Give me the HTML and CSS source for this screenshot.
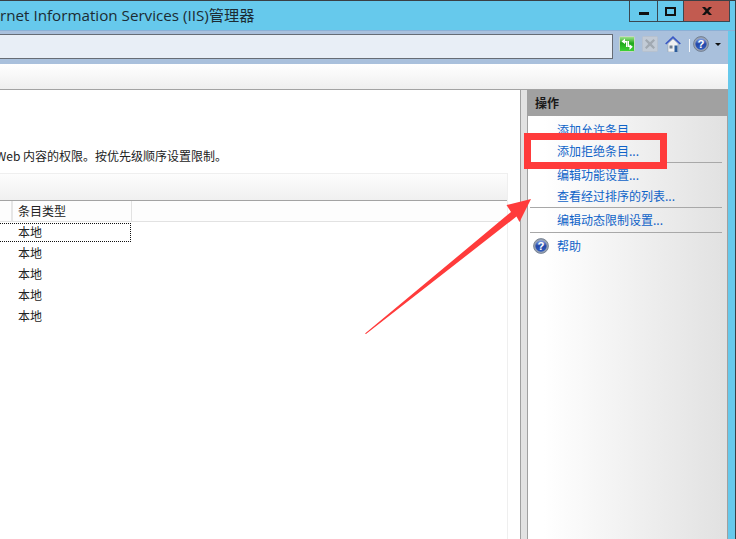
FILE: index.html
```html
<!DOCTYPE html>
<html lang="zh-CN">
<head>
    <meta charset="UTF-8">
    <title>Internet Information Services (IIS)管理器</title>
    <link rel="stylesheet" href="styles.css">
</head>
<body>
    <div class="window">
        <div class="title-bar">
            <span class="title-text">rnet Information Services (IIS)管理器</span>
            <div class="win-buttons">
                <span class="win-btn btn-min"><i class="glyph-min"></i></span>
                <span class="win-btn btn-max"><i class="glyph-max"></i></span>
                <span class="win-btn btn-close">
                    <svg width="14" height="10" viewBox="0 0 14 10"><path d="M2 1h3l2 2 2-2h3L8.500 5 12 9H9L7 7 5 9H2l3.500-4z" fill="#111"/></svg>
                </span>
            </div>
        </div>

        <div class="address-bar">
            <div class="address-input"></div>
            <div class="nav-icons">
                <svg class="nav-icon" width="16" height="16" viewBox="0 0 16 16">
                    <defs>
                        <linearGradient id="green-fill" x1="0" y1="0" x2="0" y2="1">
                            <stop offset="0" stop-color="#a6e88f"/>
                            <stop offset=".45" stop-color="#1fa81c"/>
                            <stop offset="1" stop-color="#3fd436"/>
                        </linearGradient>
                        <linearGradient id="help-shine" x1="0" y1="0" x2="0" y2="1">
                            <stop offset="0" stop-color="#86a3e4"/>
                            <stop offset=".5" stop-color="#2347a8"/>
                            <stop offset="1" stop-color="#2f5cc0"/>
                        </linearGradient>
                    </defs>
                    <rect x=".5" y=".5" width="15" height="15" rx="1" fill="url(#green-fill)" stroke="#c6d4c8"/>
                    <path d="M6 2.500 2.500 5.500 6 8V6.500h1V11h1.500V5H6z" fill="#fff"/>
                    <path d="M10.500 14 13.800 10.800 10.500 8.200v1.600H10V5H8.800v6h1.700z" fill="#fff"/>
                </svg>
                <svg class="nav-icon" width="16" height="16" viewBox="0 0 16 16">
                    <rect x=".5" y=".5" width="15" height="15" rx="1" fill="#c2cbd6" stroke="#b6c1cf"/>
                    <path d="M3 4.500 4.500 3 8 6.200 11.500 3 13 4.500 9.700 8 13 11.500 11.500 13 8 9.800 4.500 13 3 11.500 6.300 8z" fill="#a1a9b2"/>
                </svg>
                <svg class="nav-icon" width="16" height="16" viewBox="0 0 16 16">
                    <path d="M3 7.500 8 3l5 4.500V16H3z" fill="#eef0f2" stroke="#98a2ad" stroke-width=".6"/>
                    <path d="M.7 8 8 1.200 15.300 8" fill="none" stroke="#3a58c4" stroke-width="1.700"/>
                    <rect x="9.500" y="9.500" width="3" height="6.500" fill="#2b5c9c"/>
                    <rect x="4.500" y="9.500" width="3" height="3" fill="#6f7f92"/>
                </svg>
                <span class="nav-sep"></span>
                <svg class="help-icon" width="16" height="16" viewBox="0 0 17 17">
                    <use href="#help-disc"/>
                </svg>
                <span class="caret"></span>
            </div>
        </div>

        <div class="menu-bar"></div>

        <div class="main">
            <div class="left-pane">
                <div class="desc-clip"><span class="desc-text">Web 内容的权限。按优先级顺序设置限制。</span></div>
                <div class="list-box">
                    <div class="list-toolbar"></div>
                    <div class="list-head">
                        <span class="head-stub"></span>
                        <span class="head-cell">条目类型</span>
                    </div>
                    <div class="list-row row-focus"><span class="cell">本地</span></div>
                    <div class="list-row"><span class="cell">本地</span></div>
                    <div class="list-row"><span class="cell">本地</span></div>
                    <div class="list-row"><span class="cell">本地</span></div>
                    <div class="list-row"><span class="cell">本地</span></div>
                </div>
            </div>
            <div class="splitter"></div>
            <div class="actions">
                <div class="actions-head">操作</div>
                <div class="actions-body">
                    <a class="action">添加允许条目...</a>
                    <a class="action">添加拒绝条目...</a>
                    <div class="action-sep"></div>
                    <a class="action">编辑功能设置...</a>
                    <a class="action">查看经过排序的列表...</a>
                    <div class="action-sep"></div>
                    <a class="action">编辑动态限制设置...</a>
                    <div class="action-sep sep-last"></div>
                    <a class="action help-row">
                        <svg class="help-small" width="16" height="16" viewBox="0 0 17 17">
                            <g id="help-disc">
                                <circle cx="8.500" cy="8.500" r="7.900" fill="#98a3b3" stroke="#667284" stroke-width=".8"/>
                                <circle cx="8.500" cy="8.500" r="6" fill="url(#help-shine)"/>
                                <text x="8.500" y="12.700" text-anchor="middle" class="help-mark">?</text>
                            </g>
                        </svg>
                        <span>帮助</span>
                    </a>
                </div>
            </div>
        </div>

        <div class="red-box"></div>
        <svg class="red-arrow" width="736" height="539" viewBox="0 0 736 539">
            <path d="M365 333.500 511 212 506.500 205 531 199 519.500 222 516.500 216.500 366 334z" fill="#ff3b3b"/>
        </svg>
    </div>
</body>
</html>
```

FILE: styles.css
```css
html, body {
    margin: 0;
    padding: 0;
}

body {
    background-color: #fff;
    font-family: "Noto Sans CJK SC", "Open Sans", sans-serif;
    font-size: 12px;
    color: #222;
    overflow: hidden;
}

.window {
    position: relative;
    width: 736px;
    height: 539px;
    display: flex;
    flex-direction: column;
    overflow: hidden;
    background-color: #66c9ec;
    border-top: 1px solid #3a3f44;
    border-right: 1px solid #3a3f44;
    box-sizing: border-box;
}

/* title */
.title-bar {
    height: 29px;
    display: flex;
    justify-content: space-between;
    padding-right: 5px;
    border-bottom: 1px solid #8bb0d6;
}

.title-text {
    font-family: "Open Sans", "Noto Sans CJK SC", sans-serif;
    font-size: 15.2px;
    line-height: 29px;
    color: #1c2b33;
    white-space: nowrap;
}

.win-buttons {
    display: flex;
    height: 20px;
    border: 1px solid #3a4750;
    border-top: none;
}

.win-btn {
    display: flex;
    align-items: center;
    justify-content: center;
}

.btn-min {
    width: 27px;
    border-right: 1px solid #3a4750;
}

.btn-max {
    width: 25px;
    border-right: 1px solid #3a4750;
}

.btn-close {
    width: 45px;
    background-color: #c25b50;
}

.glyph-min {
    width: 10px;
    height: 3px;
    background-color: #111;
    margin-top: 5px;
}

.glyph-max {
    width: 7px;
    height: 5px;
    border: 2px solid #111;
}

/* address row */
.address-bar {
    height: 33px;
    margin-right: 7px;
    background-color: #a9c0dc;
    display: flex;
    align-items: flex-start;
}

.address-input {
    width: 612px;
    height: 23px;
    margin-top: 3px;
    background-color: #e8eef6;
    border: 1px solid #666c75;
    border-left: none;
}

.nav-icons {
    display: flex;
    align-items: flex-start;
    margin-left: 6px;
    padding-top: 5px;
}

.nav-icon {
    flex: none;
    margin-right: 7px;
}

.nav-sep {
    width: 1px;
    height: 13px;
    margin: 3px 3px 0 1px;
    background-color: #f2f5f9;
}

.help-icon {
    flex: none;
}

.caret {
    width: 0;
    height: 0;
    margin: 7px 0 0 6px;
    border-left: 3px solid transparent;
    border-right: 3px solid transparent;
    border-top: 3px solid #111;
}

.menu-bar {
    height: 25px;
    margin-right: 7px;
    background: linear-gradient(#fff, #efefef);
    border-bottom: 1px solid #a3a3a3;
}

/* main area */
.main {
    flex: 1;
    margin-right: 7px;
    display: flex;
    background-color: #fff;
    min-height: 0;
}

.left-pane {
    width: 520px;
    padding-top: 57px;
    overflow: hidden;
    box-sizing: border-box;
}

.desc-clip {
    width: 227px;
    height: 17px;
    display: flex;
    justify-content: flex-end;
    overflow: hidden;
    line-height: 17px;
}

.desc-text {
    flex: none;
    white-space: nowrap;
}

.list-box {
    width: 508px;
    height: 400px;
    margin-top: 9px;
    border-right: 1px solid #efefef;
    box-sizing: border-box;
}

.list-toolbar {
    height: 26px;
    background: linear-gradient(#fdfdfd, #f0f0f0);
    border-top: 1px solid #efefef;
    border-bottom: 1px solid #a3a3a3;
}

.list-head {
    display: flex;
    height: 20px;
    border-bottom: 1px solid #e2e2e2;
    line-height: 20px;
    background-color: #fdfdfd;
}

.head-stub {
    width: 11px;
    border-right: 2px solid #e6e6e6;
}

.head-cell {
    width: 113px;
    padding-left: 5px;
    border-right: 1px solid #e2e2e2;
}

.list-row {
    height: 21px;
    line-height: 20px;
}

.cell {
    display: block;
    width: 112px;
    padding-left: 18px;
}

.row-focus {
    height: 20px;
    padding-top: 1px;
}

.row-focus .cell {
    height: 17px;
    line-height: 16px;
    border-top: 1px dotted #111;
    border-right: 1px dotted #111;
    border-bottom: 1px dotted #111;
}

.splitter {
    width: 6px;
    background-color: #e2e2e2;
    border-left: 1px solid #a0a0a0;
    border-right: 1px solid #a0a0a0;
}

.actions {
    flex: 1;
    display: flex;
    flex-direction: column;
    background: linear-gradient(to right, #fff 8%, #e1e1e1 100%);
    border-right: 1px solid #a0a0a0;
}

.actions-head {
    height: 26px;
    padding-left: 7px;
    line-height: 26px;
    font-weight: 700;
    color: #1a1a1a;
    background-color: #a1a1a1;
}

.actions-body {
    display: flex;
    flex-direction: column;
    padding: 4px 5px 0 2px;
}

.action {
    height: 21px;
    padding-left: 27px;
    line-height: 20px;
    color: #0f63c8;
    white-space: nowrap;
}

.action-sep {
    height: 1px;
    margin-bottom: 2px;
    background-color: #a8a8a8;
}

.sep-last {
    margin-top: 1px;
}

.help-row {
    display: flex;
    align-items: center;
    padding-left: 3px;
}

.help-small {
    flex: none;
    margin-right: 8px;
}

.help-mark {
    font-family: "Liberation Sans", sans-serif;
    font-size: 12px;
    font-weight: 700;
    fill: #fff;
}

/* annotations drawn over the screenshot */
.red-box {
    position: absolute;
    left: 524px;
    top: 132px;
    width: 143px;
    height: 36px;
    border: 7px solid #ff3b3b;
    box-sizing: border-box;
}

.red-arrow {
    position: absolute;
    left: 0;
    top: -1px;
    pointer-events: none;
}
```
